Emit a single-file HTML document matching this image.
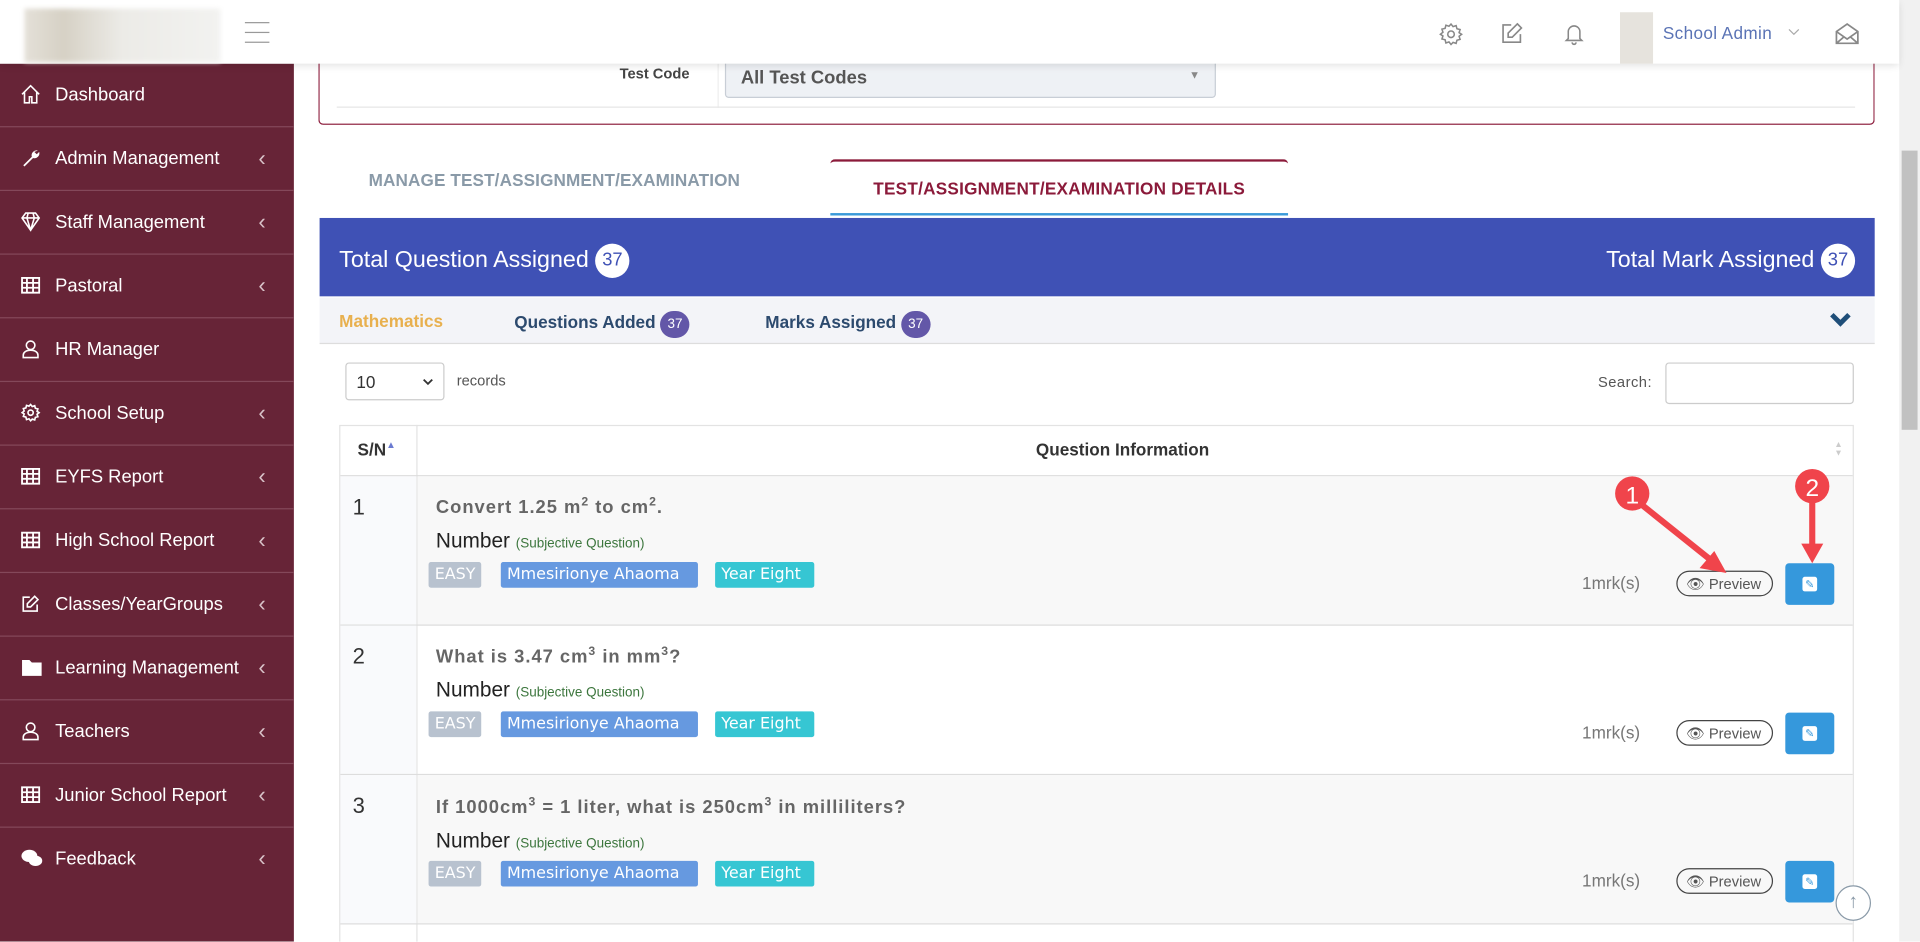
<!DOCTYPE html>
<html><head><meta charset="utf-8"><style>
*{box-sizing:border-box;margin:0;padding:0}
html,body{width:1920px;height:942px;overflow:hidden;background:#fff}
#w{position:absolute;left:0;top:0;width:1568px;height:769px;transform:scale(1.22449);transform-origin:0 0;font-family:"Liberation Sans",Arial,sans-serif;overflow:hidden}
.a{position:absolute}
.hdr{left:0;top:0;width:1551px;height:52px;background:#fff;box-shadow:0 2px 6px rgba(0,0,0,.12);z-index:5}
.sb{left:0;top:52px;width:240px;height:717px;background:#672437}
.it{position:absolute;left:0;width:240px;height:52px;border-bottom:1px solid #84485a;color:#fff;font-size:15px;line-height:52px;padding-left:45px}
.it svg{position:absolute;left:17px;top:17px}
.it .ch{position:absolute;left:211px;top:-1px;font-size:18px;color:#d9c3c9}
.badge{display:inline-block;border-radius:50%;text-align:center}
.lbl{position:absolute;top:459px;height:21px;line-height:21px;color:#fff;border-radius:2px;padding:0 5px;font-family:"DejaVu Sans",sans-serif;font-size:13px}
</style></head><body><div id="w">
<div class="a" style="left:1551px;top:0;width:17px;height:769px;background:#f1f1f1"></div>
<div class="a" style="left:1553px;top:123px;width:13px;height:228px;background:#c1c1c1"></div>
<div class="a hdr">
 <div class="a" style="left:20px;top:7px;width:160px;height:44px;background:linear-gradient(90deg,#e4e0d8,#d6d1c5 20%,#ecebe7 50%,#f2f2f0);filter:blur(2px)"></div>
 <div class="a" style="left:200px;top:18px;width:20px;height:1px;background:#999;box-shadow:0 8px 0 #999,0 16px 0 #999"></div>
 <svg class="a" style="left:1175px;top:18px" width="20" height="20" viewBox="0 0 24 24" fill="none" stroke="#888" stroke-width="1.5"><circle cx="12" cy="12" r="3.2"/><path d="M12 2l2 2.5 3-1 .8 3.1 3.1.8-1 3L22.4 12l-2.5 2 1 3-3.1.8-.8 3.1-3-1L12 22l-2-2.5-3 1-.8-3.1-3.1-.8 1-3L1.6 12l2.5-2-1-3 3.1-.8.8-3.1 3 1z"/></svg>
 <svg class="a" style="left:1225px;top:17px" width="20" height="20" viewBox="0 0 24 24" fill="none" stroke="#888" stroke-width="1.6"><path d="M20 13v8H3V4h8"/><path d="M17 3l4 4-9 9H8v-4z"/></svg>
 <svg class="a" style="left:1276px;top:17px" width="19" height="21" viewBox="0 0 24 24" fill="none" stroke="#888" stroke-width="1.6"><path d="M6 17V10a6 6 0 0112 0v7l2 2H4z"/><path d="M10 21a2 2 0 004 0"/></svg>
 <div class="a" style="left:1323px;top:10px;width:27px;height:42px;background:#e6e3dd"></div>
 <div class="a" style="left:1358px;top:19px;font-size:14px;color:#5a73b5;letter-spacing:.3px">School Admin</div>
 <svg class="a" style="left:1460px;top:23px" width="10" height="6" viewBox="0 0 10 6"><path d="M1 1l4 4 4-4" fill="none" stroke="#aaa"/></svg>
 <svg class="a" style="left:1498px;top:17px" width="21" height="21" viewBox="0 0 24 24" fill="none" stroke="#888" stroke-width="1.6"><path d="M2 10l10-7 10 7v11H2z"/><path d="M2 10l10 7 10-7M2 21l7-6M22 21l-7-6"/></svg>
</div>
<div class="a sb">
 <div class="it" style="top:0"><svg width="16" height="16" viewBox="0 0 16 16" fill="none" stroke="#fff" stroke-width="1.3"><path d="M1 8L8 1l7 7M3 6v9h4v-5h2v5h4V6"/></svg>Dashboard</div>
 <div class="it" style="top:52px"><svg width="16" height="16" viewBox="0 0 16 16" fill="#fff"><path d="M14 2a4 4 0 00-5 5L2 14l1 1 7-7a4 4 0 005-5l-2 2-2-2z"/></svg>Admin Management<span class="ch">&#8249;</span></div>
 <div class="it" style="top:104px"><svg width="16" height="16" viewBox="0 0 16 16" fill="none" stroke="#fff" stroke-width="1.3"><path d="M4 1h8l3 4-7 10L1 5zM1 5h14M6 1L5 5l3 10 3-10-1-4"/></svg>Staff Management<span class="ch">&#8249;</span></div>
 <div class="it" style="top:156px"><svg width="16" height="16" viewBox="0 0 16 16" fill="none" stroke="#fff" stroke-width="1.5"><path d="M1 2h14v12H1zM1 6h14M1 10h14M5 2v12M10 2v12"/></svg>Pastoral<span class="ch">&#8249;</span></div>
 <div class="it" style="top:208px"><svg width="16" height="16" viewBox="0 0 16 16" fill="none" stroke="#fff" stroke-width="1.3"><circle cx="8" cy="5" r="3.5"/><path d="M2 15v-2c0-2 2-4 6-4s6 2 6 4v2z"/></svg>HR Manager</div>
 <div class="it" style="top:260px"><svg width="16" height="16" viewBox="0 0 24 24" fill="none" stroke="#fff" stroke-width="2"><circle cx="12" cy="12" r="3.2"/><path d="M12 2l2 2.5 3-1 .8 3.1 3.1.8-1 3L22.4 12l-2.5 2 1 3-3.1.8-.8 3.1-3-1L12 22l-2-2.5-3 1-.8-3.1-3.1-.8 1-3L1.6 12l2.5-2-1-3 3.1-.8.8-3.1 3 1z"/></svg>School Setup<span class="ch">&#8249;</span></div>
 <div class="it" style="top:312px"><svg width="16" height="16" viewBox="0 0 16 16" fill="none" stroke="#fff" stroke-width="1.5"><path d="M1 2h14v12H1zM1 6h14M1 10h14M5 2v12M10 2v12"/></svg>EYFS Report<span class="ch">&#8249;</span></div>
 <div class="it" style="top:364px"><svg width="16" height="16" viewBox="0 0 16 16" fill="none" stroke="#fff" stroke-width="1.5"><path d="M1 2h14v12H1zM1 6h14M1 10h14M5 2v12M10 2v12"/></svg>High School Report<span class="ch">&#8249;</span></div>
 <div class="it" style="top:416px"><svg width="16" height="16" viewBox="0 0 24 24" fill="none" stroke="#fff" stroke-width="2"><path d="M20 13v8H3V4h8"/><path d="M17 3l4 4-9 9H8v-4z"/></svg>Classes/YearGroups<span class="ch">&#8249;</span></div>
 <div class="it" style="top:468px"><svg width="18" height="16" viewBox="0 0 18 16" fill="#fff"><path d="M1 2h6l2 2h8v11H1z"/></svg>Learning Management<span class="ch">&#8249;</span></div>
 <div class="it" style="top:520px"><svg width="16" height="16" viewBox="0 0 16 16" fill="none" stroke="#fff" stroke-width="1.3"><circle cx="8" cy="5" r="3.5"/><path d="M2 15v-2c0-2 2-4 6-4s6 2 6 4v2z"/></svg>Teachers<span class="ch">&#8249;</span></div>
 <div class="it" style="top:572px"><svg width="16" height="16" viewBox="0 0 16 16" fill="none" stroke="#fff" stroke-width="1.5"><path d="M1 2h14v12H1zM1 6h14M1 10h14M5 2v12M10 2v12"/></svg>Junior School Report<span class="ch">&#8249;</span></div>
 <div class="it" style="top:624px;border:none"><svg width="18" height="16" viewBox="0 0 18 16" fill="#fff"><ellipse cx="7" cy="6" rx="6.5" ry="5"/><ellipse cx="12" cy="10" rx="5.5" ry="4.2"/></svg>Feedback<span class="ch">&#8249;</span></div>
</div>
<div class="a" style="left:260px;top:30px;width:1271px;height:72px;border:1px solid #8b1a3a;border-top:none;border-radius:0 0 4px 4px"></div>
<div class="a" style="left:506px;top:53px;font-size:12px;font-weight:bold;color:#444">Test Code</div>
<div class="a" style="left:586px;top:52px;width:1px;height:36px;background:#eee"></div>
<div class="a" style="left:592px;top:47px;width:401px;height:33px;background:#eef1f5;border:1px solid #c8ced6;border-radius:3px;font-size:15px;font-weight:bold;color:#555;padding:7px 12px">All Test Codes<span style="position:absolute;right:12px;top:8px;font-size:9px;color:#888">&#9660;</span></div>
<div class="a" style="left:275px;top:87px;width:1240px;height:1px;background:#e6e6e6"></div>
<div class="a" style="left:301px;top:139px;font-size:14px;font-weight:bold;color:#8a9aa8;letter-spacing:.1px">MANAGE TEST/ASSIGNMENT/EXAMINATION</div>
<div class="a" style="left:678px;top:130px;width:374px;height:46px;border-top:2px solid #8b1a3a;border-bottom:2px solid #3a9ad9;border-radius:4px 4px 0 0;text-align:center;font-size:14px;font-weight:bold;color:#8b1a3a;padding-top:14px;letter-spacing:.2px">TEST/ASSIGNMENT/EXAMINATION DETAILS</div>
<div class="a" style="left:261px;top:178px;width:1270px;height:64px;background:#3f51b5;color:#fff;font-size:19px">
 <div class="a" style="left:16px;top:21px">Total Question Assigned <span class="badge" style="background:#fff;color:#3f51b5;width:28px;height:28px;line-height:28px;font-size:15px;vertical-align:middle">37</span></div>
 <div class="a" style="right:16px;top:21px">Total Mark Assigned <span class="badge" style="background:#fff;color:#3f51b5;width:28px;height:28px;line-height:28px;font-size:15px;vertical-align:middle">37</span></div>
</div>
<div class="a" style="left:261px;top:243px;width:1270px;height:38px;background:#f3f4f8;border-bottom:1px solid #ddd;font-size:14px;font-weight:bold">
 <span class="a" style="left:16px;top:11px;color:#e8b04e">Mathematics</span>
 <span class="a" style="left:159px;top:11px;color:#2c4a6e">Questions Added <span class="badge" style="background:#6357a8;color:#fff;width:24px;height:22px;line-height:22px;font-size:11px;font-weight:normal;border-radius:11px">37</span></span>
 <span class="a" style="left:364px;top:11px;color:#2c4a6e">Marks Assigned <span class="badge" style="background:#6357a8;color:#fff;width:24px;height:22px;line-height:22px;font-size:11px;font-weight:normal;border-radius:11px">37</span></span>
 <svg class="a" style="left:1233px;top:12px" width="18" height="12" viewBox="0 0 18 12"><path d="M2 2l7 7 7-7" fill="none" stroke="#1f4e79" stroke-width="4"/></svg>
</div>
<div class="a" style="left:282px;top:296px;width:81px;height:31px;border:1px solid #ccc;border-radius:3px;font-size:14px;color:#333;padding:7px 8px">10<svg style="position:absolute;right:8px;top:12px" width="9" height="6" viewBox="0 0 9 6"><path d="M1 1l3.5 3.5L8 1" fill="none" stroke="#333" stroke-width="1.5"/></svg></div>
<div class="a" style="left:373px;top:304px;font-size:12px;color:#555">records</div>
<div class="a" style="left:1305px;top:305px;font-size:12px;color:#555;letter-spacing:.4px">Search:</div>
<div class="a" style="left:1360px;top:296px;width:154px;height:34px;border:1px solid #ccc;border-radius:3px"></div>
<div class="a" style="left:277px;top:347px;width:1237px;height:430px;border:1px solid #e3e3e3"></div>
<div class="a" style="left:340px;top:347px;width:1px;height:430px;background:#e3e3e3"></div>
<div class="a" style="left:292px;top:359px;font-size:14px;font-weight:bold;color:#333">S/N<span style="font-size:8px;color:#6b7bd1;vertical-align:top">&#9650;</span></div>
<div class="a" style="left:846px;top:359px;font-size:14px;font-weight:bold;color:#333">Question Information</div>
<div class="a" style="left:1498px;top:360px;font-size:7px;color:#ccc;line-height:7px">&#9650;<br>&#9660;</div>
<div class="a" style="left:278px;top:388px;width:1235px;height:1px;background:#ddd"></div>
<div class="a" style="left:278px;top:389px;width:62px;height:121px;background:#f9fafc"></div>
<div class="a" style="left:341px;top:389px;width:1172px;height:121px;background:#f8f8f8"></div>
<div class="a" style="left:278px;top:510px;width:1235px;height:1px;background:#ddd"></div>
<div class="a" style="left:278px;top:511px;width:62px;height:121px;background:#f9fafc"></div>
<div class="a" style="left:278px;top:632px;width:1235px;height:1px;background:#ddd"></div>
<div class="a" style="left:278px;top:633px;width:62px;height:121px;background:#f9fafc"></div>
<div class="a" style="left:341px;top:633px;width:1172px;height:121px;background:#f8f8f8"></div>
<div class="a" style="left:278px;top:754px;width:1235px;height:1px;background:#ddd"></div>
<!-- row 1 -->
<div class="a" style="left:288px;top:404px;font-size:18px;color:#333">1</div>
<div class="a" style="left:356px;top:405px;font-size:15px;font-weight:bold;color:#666;letter-spacing:.8px">Convert 1.25 m<sup style="font-size:10px">2</sup> to cm<sup style="font-size:10px">2</sup>.</div>
<div class="a" style="left:356px;top:432px;font-size:17px;color:#222">Number <span style="font-size:11px;color:#3c763d">(Subjective Question)</span></div>
<span class="lbl" style="left:350px;background:#b8c2cf">EASY</span><span class="lbl" style="left:409px;width:161px;background:#6699e0">Mmesirionye Ahaoma</span><span class="lbl" style="left:584px;width:81px;background:#36c6d3">Year Eight</span>
<div class="a" style="left:1292px;top:468px;font-size:14px;color:#777">1mrk(s)</div>
<div class="a" style="left:1369px;top:466px;width:79px;height:21px;border:1px solid #444;border-radius:11px;font-size:12px;color:#555;padding:3px 0 0 7px">&#128065; Preview</div>
<div class="a" style="left:1458px;top:460px;width:40px;height:34px;background:#3598dc;border-radius:3px"><div class="a" style="left:14px;top:11px;width:12px;height:12px;background:#fff;border-radius:2px;color:#3598dc;font-size:9px;text-align:center;line-height:12px">&#9998;</div></div>
<!-- row 2 -->
<div class="a" style="left:288px;top:526px;font-size:18px;color:#333">2</div>
<div class="a" style="left:356px;top:527px;font-size:15px;font-weight:bold;color:#666;letter-spacing:.8px">What is 3.47 cm<sup style="font-size:10px">3</sup> in mm<sup style="font-size:10px">3</sup>?</div>
<div class="a" style="left:356px;top:554px;font-size:17px;color:#222">Number <span style="font-size:11px;color:#3c763d">(Subjective Question)</span></div>
<span class="lbl" style="left:350px;top:581px;background:#b8c2cf">EASY</span><span class="lbl" style="left:409px;top:581px;width:161px;background:#6699e0">Mmesirionye Ahaoma</span><span class="lbl" style="left:584px;top:581px;width:81px;background:#36c6d3">Year Eight</span>
<div class="a" style="left:1292px;top:590px;font-size:14px;color:#777">1mrk(s)</div>
<div class="a" style="left:1369px;top:588px;width:79px;height:21px;border:1px solid #444;border-radius:11px;font-size:12px;color:#555;padding:3px 0 0 7px">&#128065; Preview</div>
<div class="a" style="left:1458px;top:582px;width:40px;height:34px;background:#3598dc;border-radius:3px"><div class="a" style="left:14px;top:11px;width:12px;height:12px;background:#fff;border-radius:2px;color:#3598dc;font-size:9px;text-align:center;line-height:12px">&#9998;</div></div>
<!-- row 3 -->
<div class="a" style="left:288px;top:648px;font-size:18px;color:#333">3</div>
<div class="a" style="left:356px;top:650px;font-size:15px;font-weight:bold;color:#666;letter-spacing:.8px">If 1000cm<sup style="font-size:10px">3</sup> = 1 liter, what is 250cm<sup style="font-size:10px">3</sup> in milliliters?</div>
<div class="a" style="left:356px;top:677px;font-size:17px;color:#222">Number <span style="font-size:11px;color:#3c763d">(Subjective Question)</span></div>
<span class="lbl" style="left:350px;top:703px;background:#b8c2cf">EASY</span><span class="lbl" style="left:409px;top:703px;width:161px;background:#6699e0">Mmesirionye Ahaoma</span><span class="lbl" style="left:584px;top:703px;width:81px;background:#36c6d3">Year Eight</span>
<div class="a" style="left:1292px;top:711px;font-size:14px;color:#777">1mrk(s)</div>
<div class="a" style="left:1369px;top:709px;width:79px;height:21px;border:1px solid #444;border-radius:11px;font-size:12px;color:#555;padding:3px 0 0 7px">&#128065; Preview</div>
<div class="a" style="left:1458px;top:703px;width:40px;height:34px;background:#3598dc;border-radius:3px"><div class="a" style="left:14px;top:11px;width:12px;height:12px;background:#fff;border-radius:2px;color:#3598dc;font-size:9px;text-align:center;line-height:12px">&#9998;</div></div>
<svg class="a" style="left:1300px;top:380px" width="220" height="110" viewBox="1300 380 220 110">
 <path d="M1338 410L1398 458" stroke="#f0444b" stroke-width="5"/><path d="M1410 468l-22-4 12-14z" fill="#f0444b"/>
 <path d="M1480 405v40" stroke="#f0444b" stroke-width="5"/><path d="M1480 460l-9-16h18z" fill="#f0444b"/>
 <circle cx="1333" cy="403" r="14" fill="#f0444b"/><text x="1333" y="411" font-size="20" fill="#fff" text-anchor="middle" font-family="Liberation Sans">1</text>
 <circle cx="1480" cy="397" r="14" fill="#f0444b"/><text x="1480" y="405" font-size="20" fill="#fff" text-anchor="middle" font-family="Liberation Sans">2</text>
</svg>
<div class="a" style="left:1499px;top:723px;width:29px;height:29px;border:1.5px solid #8a9aa8;border-radius:50%;background:#fff;color:#8a9aa8;text-align:center;font-size:16px;line-height:26px">&#8593;</div>
</div></body></html>
